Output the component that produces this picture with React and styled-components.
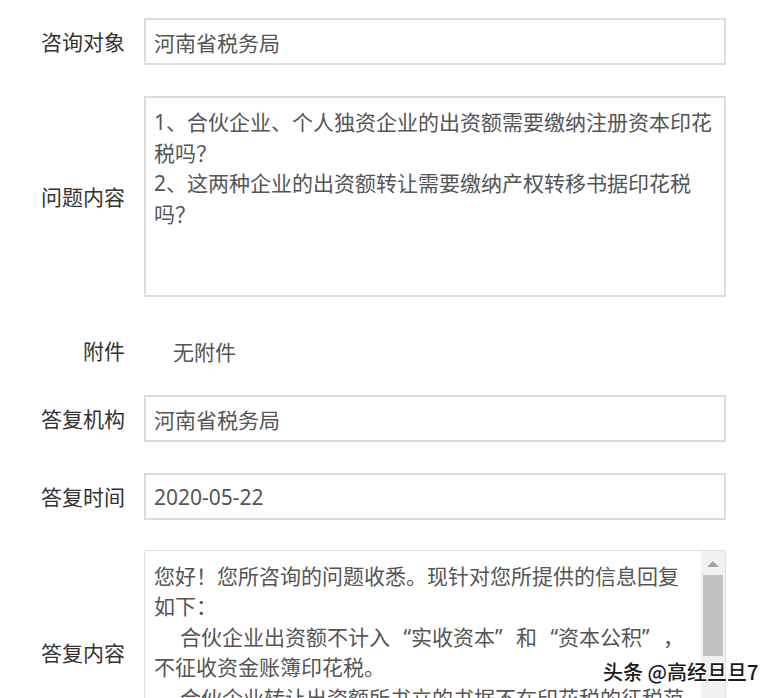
import React from "react";
import styled, { createGlobalStyle } from "styled-components";

const GlobalStyle = createGlobalStyle`
  html, body {
    margin: 0;
    padding: 0;
    background: #ffffff;
    overflow: hidden;
  }
  body {
    font-family: "Noto Sans", "Noto Sans CJK SC", sans-serif;
  }
`;

const Page = styled.div`
  position: relative;
  width: 777px;
  height: 698px;
  overflow: hidden;
  padding-top: 18px;
  box-sizing: border-box;
`;

const Form = styled.div`
  display: grid;
  grid-template-columns: 125px 582px;
  column-gap: 19px;
  row-gap: 31px;
  align-items: center;
`;

const Label = styled.div`
  font-size: 21px;
  line-height: 30px;
  color: #333333;
  text-align: right;
  white-space: nowrap;
`;

const AttachLabel = styled(Label)`
  align-self: start;
  margin-top: 8px;
  margin-bottom: -2px;
`;

const Field = styled.div`
  box-sizing: border-box;
  width: 582px;
  height: 47px;
  border: 2px solid #dddddd;
  padding: 0 8px;
  display: flex;
  align-items: center;
  font-size: 21px;
  color: #555555;
  white-space: nowrap;
`;

const TextArea = styled.div`
  box-sizing: border-box;
  width: 582px;
  height: 201px;
  border: 2px solid #dddddd;
  padding: 9px 8px;
  font-size: 21px;
  line-height: 30.7px;
  color: #555555;
  white-space: pre-wrap;
  word-break: break-all;
  line-break: strict;
`;

const PlainValue = styled.div`
  align-self: start;
  height: 46px;
  display: flex;
  align-items: center;
  padding-left: 29px;
  font-size: 21px;
  color: #555555;
  margin-bottom: -10px;
`;

const ScrollBox = styled.div`
  box-sizing: border-box;
  width: 582px;
  height: 204px;
  border: 1px solid #e1e1e1;
  display: flex;
  margin-top: -1px;
  align-self: start;
`;

const ReplyText = styled.div`
  flex: 1;
  overflow: hidden;
  padding: 10px 6px 0 9px;
  font-size: 21px;
  line-height: 30.4px;
  color: #555555;
  word-break: break-all;
`;

const Para = styled.p`
  margin: 0;
  text-indent: ${(p) => (p.$indent ? "26px" : "0")};
`;

const Quote = styled.span`
  display: inline-block;
  width: 1em;
  text-indent: 0;
  text-align: ${(p) => (p.$open ? "right" : "left")};
`;

const ScrollTrack = styled.div`
  width: 24px;
  background: #f1f1f1;
  display: flex;
  flex-direction: column;
  align-items: center;
`;

const ArrowUp = styled.div`
  margin-top: 10px;
  width: 0;
  height: 0;
  border-left: 6px solid transparent;
  border-right: 6px solid transparent;
  border-bottom: 6px solid #a3a3a3;
`;

const Thumb = styled.div`
  margin-top: 8px;
  width: 20px;
  height: 81px;
  background: #c1c1c1;
`;

const ReplyLabel = styled(Label)`
  align-self: center;
`;

const Watermark = styled.div`
  position: absolute;
  left: 603px;
  top: 658px;
  font-family: "Noto Sans CJK SC", "Noto Sans", sans-serif;
  font-size: 20px;
  line-height: 28px;
  font-weight: 500;
  color: #1a1a1a;
  white-space: nowrap;
  text-shadow: 0 0 2px #ffffff, 0 0 2px #ffffff, 0 0 3px #ffffff;
`;

const question =
  "1、合伙企业、个人独资企业的出资额需要缴纳注册资本印花税吗？\n2、这两种企业的出资额转让需要缴纳产权转移书据印花税吗？";

function App() {
  return (
    <Page>
      <GlobalStyle />
      <Form>
        <Label>咨询对象</Label>
        <Field>河南省税务局</Field>

        <Label>问题内容</Label>
        <TextArea>{question}</TextArea>

        <AttachLabel>附件</AttachLabel>
        <PlainValue>无附件</PlainValue>

        <Label>答复机构</Label>
        <Field>河南省税务局</Field>

        <Label>答复时间</Label>
        <Field>2020-05-22</Field>

        <ReplyLabel>答复内容</ReplyLabel>
        <ScrollBox>
          <ReplyText>
            <Para>您好！您所咨询的问题收悉。现针对您所提供的信息回复如下：</Para>
            <Para $indent>
              合伙企业出资额不计入<Quote $open>“</Quote>实收资本<Quote>”</Quote>和<Quote $open>“</Quote>资本公积<Quote>”</Quote>，不征收资金账簿印花税。
            </Para>
            <Para $indent>
              合伙企业转让出资额所书立的书据不在印花税的征税范围内，不征收印花税。
            </Para>
          </ReplyText>
          <ScrollTrack>
            <ArrowUp />
            <Thumb />
          </ScrollTrack>
        </ScrollBox>
      </Form>
      <Watermark>头条 @高经旦旦7</Watermark>
    </Page>
  );
}

export default App;
